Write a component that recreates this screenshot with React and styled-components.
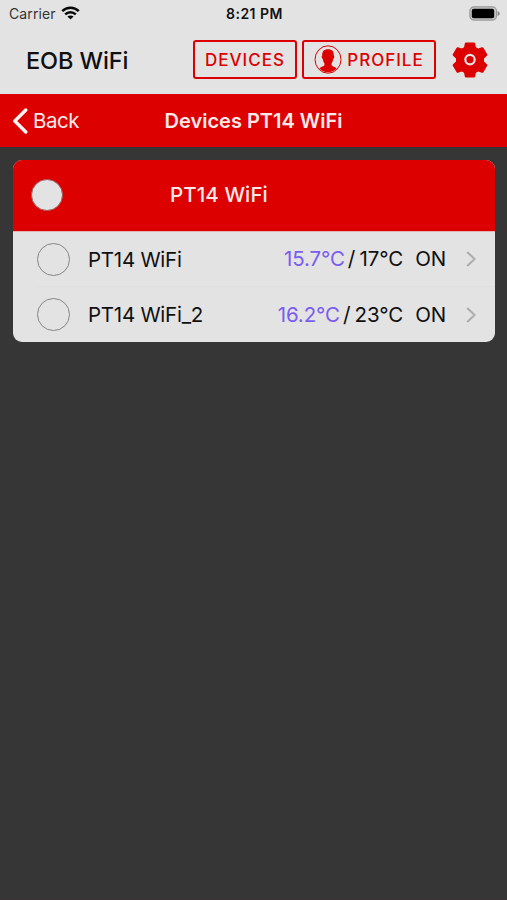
import React from "react";
import styled, { createGlobalStyle } from "styled-components";

const RED = "#dc0000";
const PAPER = "#e3e3e3";

const GlobalStyle = createGlobalStyle`
  * { box-sizing: border-box; }
  body { margin: 0; background: #363636; }
`;

const Screen = styled.div`
  width: 507px;
  height: 900px;
  overflow: hidden;
  background: #363636;
  border-bottom: 1px solid #3a3236;
  font-family: Inter, "Liberation Sans", sans-serif;
  color: #101010;
`;

const Label = styled.span`
  padding-top: ${(p) => p.$drop || 0}px;
  font-size: ${(p) => p.$size}px;
  font-weight: ${(p) => p.$weight || 400};
  letter-spacing: ${(p) => p.$track || 0}px;
  color: ${(p) => p.$color || "inherit"};
  line-height: 1.2;
  white-space: pre;
`;

const StatusBar = styled.div`
  display: grid;
  grid-template-columns: 1fr auto 1fr;
  align-items: center;
  height: 28px;
  padding: 0 7px 0 9px;
  background: ${PAPER};
`;

const Carrier = styled.div`
  display: flex;
  align-items: center;
  gap: 5px;
`;

const BatterySlot = styled.div`
  display: flex;
  justify-content: flex-end;
  padding-bottom: 2px;
`;

const Header = styled.header`
  display: flex;
  align-items: center;
  height: 66px;
  padding: 0 19px 3px 26px;
  background: ${PAPER};
`;

const Brand = styled.div`
  display: flex;
  width: 167px;
`;

const OutlineButton = styled.button`
  display: flex;
  align-items: center;
  justify-content: center;
  gap: 5px;
  width: ${(p) => p.$width}px;
  height: 39px;
  margin: 0 5px 0 0;
  padding: 0;
  border: 2px solid ${RED};
  border-radius: 3px;
  background: transparent;
  color: ${RED};
  font-family: inherit;
`;

const GearButton = styled.button`
  display: flex;
  margin-left: auto;
  padding: 0;
  border: 0;
  background: none;
`;

const NavBar = styled.nav`
  display: grid;
  grid-template-columns: 1fr auto 1fr;
  align-items: center;
  height: 53px;
  padding: 0 12px;
  background: ${RED};
  color: #fbe9e9;
`;

const Back = styled.div`
  display: flex;
  align-items: center;
  gap: 5px;
`;

const Card = styled.section`
  margin: 13px 12px 0 13px;
  border-radius: 9px;
  overflow: hidden;
  background: ${PAPER};
`;

const CardHeader = styled.div`
  display: flex;
  align-items: center;
  height: 72px;
  padding: 0 0 1px 18px;
  border-bottom: 1px solid #e0b4b4;
  background: ${RED};
  color: #fbe9e9;
`;

const GroupToggle = styled.div`
  width: 32px;
  height: 32px;
  margin-right: 107px;
  border: 1px solid #9c6060;
  border-radius: 50%;
  background: ${PAPER};
`;

const DeviceRow = styled.div`
  display: flex;
  align-items: center;
  height: 55px;
  margin-left: 24px;
  padding-right: 19px;
  border-bottom: ${(p) => (p.$last ? "0" : "1px solid #dfdfdf")};
`;

const Radio = styled.div`
  width: 33px;
  height: 33px;
  margin-right: 18px;
  border: 1px solid #858585;
  border-radius: 50%;
`;

const Reading = styled.div`
  display: flex;
  align-items: baseline;
  margin-left: auto;
  margin-right: 20px;
`;

const Slash = styled.span`
  margin: 0 4px 0 3px;
  font-size: 21px;
  line-height: 1.2;
`;

const State = styled.div`
  display: flex;
  margin-left: 12px;
`;

const WifiIcon = () => (
  <svg width="19" height="15" viewBox="0 0 19 15" fill="none" stroke="#080808">
    <path d="M1.2 5.2C5.8 .6 13.2 .6 17.8 5.2" strokeWidth="2.6" />
    <path d="M4.2 8.4C7.1 5.5 11.9 5.5 14.8 8.4" strokeWidth="2.5" />
    <path d="M9.5 13.6L6.4 10.5C8.2 9 10.8 9 12.6 10.5Z" fill="#080808" stroke="none" />
  </svg>
);

const BatteryIcon = () => (
  <svg width="31" height="15" viewBox="0 0 31 15">
    <rect x="0.9" y="0.9" width="26.6" height="13.2" rx="4" fill="#c9c9c9" stroke="#999" strokeWidth="1.2" />
    <rect x="2.8" y="2.8" width="22.4" height="9.4" rx="2" fill="#000" />
    <path d="M28.6 5Q30.8 6 30.8 7.5T28.6 10Z" fill="#888" />
  </svg>
);

const ProfileIcon = () => (
  <svg width="28" height="29" viewBox="0 0 28 29">
    <ellipse cx="14" cy="14.5" rx="13" ry="13.7" fill="none" stroke={RED} strokeWidth="1" />
    <path
      d="M14 4.2C18.2 4.2 20 6.4 19.8 10.6C20.7 11 20.3 13.6 19.2 14C18.9 16 18.4 17.2 17.6 18.2V20.2C18 21.2 20.8 21.6 22.6 23.2C18.8 28.6 9.2 28.6 5.4 23.2C7.2 21.6 10 21.2 10.4 20.2V18.2C9.6 17.2 9.1 16 8.8 14C7.7 13.6 7.3 11 8.2 10.6C8 6.4 9.8 4.2 14 4.2Z"
      fill={RED}
    />
  </svg>
);

const GearIcon = () => (
  <svg width="36" height="36" viewBox="0 0 36 36">
    <path
      d="M12.8 1.4Q13 .4 14 .4H22Q23 .4 23.2 1.4L23.9 5.2L26.3 6.6L29.8 5.3Q30.9 5 31.4 5.8L35.2 12.2Q35.7 13.1 34.9 13.8L32 16.4V19.6L34.9 22.2Q35.7 22.9 35.2 23.8L31.4 30.2Q30.9 31 29.8 30.7L26.3 29.4L23.9 30.8L23.2 34.6Q23 35.6 22 35.6H14Q13 35.6 12.8 34.6L12.1 30.8L9.7 29.4L6.2 30.7Q5.1 31 4.6 30.2L.8 23.8Q.3 22.9 1.1 22.2L4 19.6V16.4L1.1 13.8Q.3 13.1 .8 12.2L4.6 5.8Q5.1 5 6.2 5.3L9.7 6.6L12.1 5.2Z"
      fill={RED}
    />
    <circle cx="18" cy="17.6" r="4.7" fill={RED} stroke={PAPER} strokeWidth="2.2" />
  </svg>
);

const BackIcon = () => (
  <svg width="16" height="26" viewBox="0 0 16 26">
    <path d="M13.8 2L2.8 13L13.8 24" fill="none" stroke="#fff3f3" strokeWidth="3.4" strokeLinecap="round" strokeLinejoin="round" />
  </svg>
);

const ChevronIcon = () => (
  <svg width="10" height="16" viewBox="0 0 10 16">
    <path d="M1.2 1L8.6 8L1.2 15" fill="none" stroke="#acacac" strokeWidth="2" />
  </svg>
);

const devices = [
  { name: "PT14 WiFi", current: "15.7°C", target: "17°C", state: "ON" },
  { name: "PT14 WiFi_2", current: "16.2°C", target: "23°C", state: "ON" },
];

export default function App() {
  return (
    <Screen>
      <GlobalStyle />
      <StatusBar>
        <Carrier>
          <Label $size={14} $track={0.1} $color="#333">Carrier</Label>
          <WifiIcon />
        </Carrier>
        <Label $size={14} $weight={600} $track={0.5}>8:21 PM</Label>
        <BatterySlot><BatteryIcon /></BatterySlot>
      </StatusBar>
      <Header>
        <Brand><Label $size={23.5} $weight={500} $track={-0.1} $drop={3}>EOB WiFi</Label></Brand>
        <OutlineButton $width={104}>
          <Label $size={17} $weight={500} $track={1} $drop={1}>DEVICES</Label>
        </OutlineButton>
        <OutlineButton $width={134}>
          <ProfileIcon />
          <Label $size={17} $weight={500} $track={1} $drop={1}>PROFILE</Label>
        </OutlineButton>
        <GearButton><GearIcon /></GearButton>
      </Header>
      <NavBar>
        <Back>
          <BackIcon />
          <Label $size={20.5} $track={-0.5} $drop={2}>Back</Label>
        </Back>
        <Label $size={20} $weight={600}>Devices PT14 WiFi</Label>
      </NavBar>
      <Card>
        <CardHeader>
          <GroupToggle />
          <Label $size={20.5} $weight={500} $track={0.1} $drop={1}>PT14 WiFi</Label>
        </CardHeader>
        {devices.map((d, i) => (
          <DeviceRow key={d.name} $last={i === devices.length - 1}>
            <Radio />
            <Label $size={20.5} $track={-0.25} $drop={2}>{d.name}</Label>
            <Reading>
              <Label $size={20.5} $track={-0.1} $drop={1} $color="#7a5cf0">{d.current}</Label>
              <Slash>/</Slash>
              <Label $size={20.5} $track={-0.05}>{d.target}</Label>
              <State><Label $size={20.5} $track={-0.2}>{d.state}</Label></State>
            </Reading>
            <ChevronIcon />
          </DeviceRow>
        ))}
      </Card>
    </Screen>
  );
}
